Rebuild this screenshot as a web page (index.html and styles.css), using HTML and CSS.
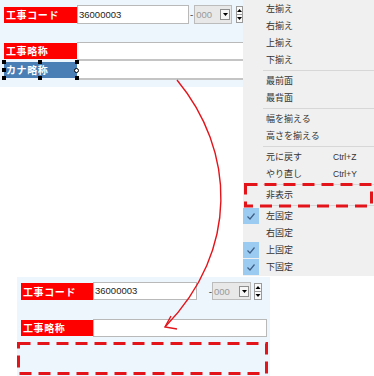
FILE: index.html
```html
<!DOCTYPE html>
<html lang="ja">
<head>
  <meta charset="UTF-8">
  <title>非表示</title>
  <link rel="stylesheet" href="styles.css">
</head>
<body>
<div class="page">
  <div class="top">
    <div class="form form-top">
      <div class="row row-code">
        <span class="label red">工事コード</span>
        <span class="field code">36000003</span>
        <span class="dash">-</span>
        <span class="combo">
          <span class="combo-val">000</span>
          <span class="drop"><svg width="5" height="3" viewBox="0 0 5 3"><path d="M0 0H5L2.5 3Z" fill="#000"/></svg></span>
        </span>
        <span class="spin">
          <svg width="5" height="15" viewBox="0 0 5 15"><path d="M0 5H5L2.5 2Z" fill="#000"/><path d="M0 7.5H5" stroke="#999" stroke-width="1"/><path d="M0 10H5L2.5 13Z" fill="#000"/></svg>
        </span>
      </div>

      <div class="stack">
        <div class="row row-line">
          <span class="label red">工事略称</span>
          <span class="line line-first"></span>
        </div>
        <div class="row row-line">
          <span class="label blue">カナ略称
            <i class="handle h-tl"></i><i class="handle h-tm"></i><i class="handle h-tr"></i>
            <i class="handle h-ml"></i><i class="handle h-mr"></i>
            <i class="handle h-bl"></i><i class="handle h-bm"></i><i class="handle h-br"></i>
          </span>
          <span class="line"></span>
        </div>
      </div>
    </div>

    <ul class="menu">
      <li><span class="chk"></span><span class="txt">左揃え</span></li>
      <li><span class="chk"></span><span class="txt">右揃え</span></li>
      <li><span class="chk"></span><span class="txt">上揃え</span></li>
      <li><span class="chk"></span><span class="txt">下揃え</span></li>
      <li class="sep"></li>
      <li><span class="chk"></span><span class="txt">最前面</span></li>
      <li><span class="chk"></span><span class="txt">最背面</span></li>
      <li class="sep"></li>
      <li><span class="chk"></span><span class="txt">幅を揃える</span></li>
      <li><span class="chk"></span><span class="txt">高さを揃える</span></li>
      <li class="sep"></li>
      <li><span class="chk"></span><span class="txt">元に戻す</span><span class="key">Ctrl+Z</span></li>
      <li><span class="chk"></span><span class="txt">やり直し</span><span class="key">Ctrl+Y</span></li>
      <li class="sep"></li>
      <li><span class="chk"></span><span class="txt">非表示</span></li>
      <li class="sep"></li>
      <li><span class="chk on"><svg width="16" height="16" viewBox="0 0 16 16"><path d="M4.5 8.5L7 11L11.5 5.5" fill="none" stroke="#3d5f86" stroke-width="1.2"/></svg></span><span class="txt">左固定</span></li>
      <li><span class="chk"></span><span class="txt">右固定</span></li>
      <li><span class="chk on"><svg width="16" height="16" viewBox="0 0 16 16"><path d="M4.5 8.5L7 11L11.5 5.5" fill="none" stroke="#3d5f86" stroke-width="1.2"/></svg></span><span class="txt">上固定</span></li>
      <li><span class="chk on"><svg width="16" height="16" viewBox="0 0 16 16"><path d="M4.5 8.5L7 11L11.5 5.5" fill="none" stroke="#3d5f86" stroke-width="1.2"/></svg></span><span class="txt">下固定</span></li>
    </ul>
  </div>

  <div class="form form-bottom">
    <div class="row row-code">
      <span class="label red">工事コード</span>
      <span class="field code">36000003</span>
      <span class="dash">-</span>
      <span class="combo">
        <span class="combo-val">000</span>
        <span class="drop"><svg width="5" height="3" viewBox="0 0 5 3"><path d="M0 0H5L2.5 3Z" fill="#000"/></svg></span>
      </span>
      <span class="spin">
        <svg width="6" height="15" viewBox="0 0 6 15"><path d="M0.5 5H5.5L3 2Z" fill="#000"/><path d="M0 7.5H6" stroke="#999" stroke-width="1"/><path d="M0.5 10H5.5L3 13Z" fill="#000"/></svg>
      </span>
    </div>
    <div class="row row-name">
      <span class="label red">工事略称</span>
      <span class="field name"></span>
    </div>
  </div>

  <!-- annotations drawn over the screenshot -->
  <svg class="notes" width="374" height="376" viewBox="0 0 374 376">
    <rect x="245.5" y="184.5" width="126" height="21.5" fill="none" stroke="#e4141b" stroke-width="3" stroke-dasharray="12 7"/>
    <rect x="18.5" y="343.5" width="248" height="30" fill="none" stroke="#e4141b" stroke-width="3" stroke-dasharray="12 7"/>
    <path d="M177 80C235 150 240 250 165 327" fill="none" stroke="#e4141b" stroke-width="1.4"/>
    <path d="M171 316L165 327L177 329" fill="none" stroke="#e4141b" stroke-width="1.4"/>
  </svg>
</div>
</body>
</html>
```

FILE: styles.css
```css
body {
  margin: 0;
  background: #fff;
  font-family: "Noto Sans CJK JP", "Noto Sans", sans-serif;
}

.page {
  position: relative;
  width: 374px;
  height: 376px;
  overflow: hidden;
}

.top {
  display: flex;
  align-items: flex-start;
}

.form {
  background-color: #edf5fd;
  box-sizing: border-box;
  overflow: hidden;
  padding: 5px 0 0 4px;
}

.form-top {
  width: 243px;
  height: 87px;
}

.form-bottom {
  width: 253px;
  height: 99px;
  margin: 1px 0 0 17px;
}

.row {
  display: flex;
  align-items: center;
}

.label {
  position: relative;
  flex: none;
  width: 73px;
  height: 16px;
  line-height: 16px;
  padding-left: 2px;
  box-sizing: border-box;
  color: #fff;
  font-size: 10px;
  font-weight: bold;
  letter-spacing: 0.6px;
  white-space: nowrap;
}

.red {
  background-color: #f00;
}

.blue {
  background-color: #4a7fb6;
}

.field {
  display: block;
  box-sizing: border-box;
  background-color: #fff;
  border: 1px solid #b9b9b9;
}

.code {
  height: 19px;
  line-height: 17px;
  padding-left: 1px;
  font-family: "Liberation Sans", Arial, sans-serif;
  font-size: 9.5px;
  color: #222;
}

.form-top .code {
  width: 113px;
}

.dash {
  flex: none;
  font-family: "Liberation Sans", Arial, sans-serif;
  font-size: 10px;
  color: #555;
}

.form-top .dash {
  width: 5px;
  text-align: center;
}

.combo {
  position: relative;
  display: flex;
  align-items: center;
  box-sizing: border-box;
  height: 19px;
  background-color: #e8e8e8;
  border: 1px solid #bcbcbc;
}

.form-top .combo {
  width: 38px;
}

.combo-val {
  flex: 1;
  padding-left: 1px;
  font-family: "Liberation Sans", Arial, sans-serif;
  font-size: 9.5px;
  color: #9a9a9a;
}

.drop {
  display: flex;
  align-items: center;
  justify-content: center;
  box-sizing: border-box;
  width: 10px;
  height: 11px;
  margin-right: 1px;
  background-color: #f6f6f6;
  border: 1px solid #8f8f8f;
}

.spin {
  display: flex;
  box-sizing: border-box;
  width: 7px;
  height: 17px;
  margin-left: 4px;
  background-color: #fafafa;
  border: 1px solid #9a9a9a;
}

.stack {
  margin-top: 18px;
}

.row-line {
  align-items: flex-start;
  height: 19px;
}

.row-line .label {
  margin-top: 1px;
}

.line {
  flex: 1;
  box-sizing: border-box;
  height: 19px;
  background-color: #fff;
  border-bottom: 2px solid #c4c4c4;
}

.line-first {
  border-top: 1px solid #b9b9b9;
}

/* selection handles */
.handle {
  position: absolute;
  width: 4px;
  height: 4px;
  background-color: #000;
}

.h-tl, .h-ml, .h-bl { left: -2px; }
.h-tm, .h-bm { left: 34px; }
.h-tr, .h-mr, .h-br { right: -2px; }
.h-tl, .h-tm, .h-tr { top: -2px; }
.h-ml, .h-mr { top: 6px; }
.h-bl, .h-bm, .h-br { bottom: -2px; }

.h-mr {
  box-sizing: border-box;
  width: 5px;
  height: 5px;
  background-color: #fff;
  border: 1px solid #000;
  border-radius: 50%;
}

/* context menu */
.menu {
  flex: none;
  width: 131px;
  height: 276px;
  margin: 0;
  padding: 0;
  list-style-type: none;
  background-color: #f0f0f0;
  font-size: 9px;
  color: #333;
}

.menu li {
  display: flex;
  align-items: center;
  height: 17px;
}

.menu li.sep {
  height: 4px;
  align-items: center;
}

.menu li.sep::after {
  content: "";
  display: block;
  width: 111px;
  height: 1px;
  margin-left: 20px;
  background-color: #d7d7d7;
}

.chk {
  flex: none;
  display: flex;
  width: 16px;
  height: 16px;
  margin-right: 7px;
}

.chk.on {
  background-color: #9ccbf2;
}

.txt {
  width: 67px;
  white-space: nowrap;
}

.key {
  font-family: "Liberation Sans", Arial, sans-serif;
  font-size: 8.5px;
  color: #333;
}

/* bottom panel */
.form-bottom .code {
  width: 104px;
  height: 18px;
  line-height: 16px;
}

.form-bottom .row-code .label {
  width: 72px;
  height: 17px;
  line-height: 17px;
}

.form-bottom .dash {
  width: 15px;
  text-align: right;
}

.form-bottom .combo {
  width: 39px;
  height: 18px;
}

.form-bottom .spin {
  width: 8px;
  margin-left: 3px;
}

.row-name {
  margin-top: 19px;
}

.row-name .label {
  width: 72px;
}

.name {
  width: 174px;
  height: 18px;
}

.notes {
  position: absolute;
  top: 0;
  left: 0;
  pointer-events: none;
}
```
